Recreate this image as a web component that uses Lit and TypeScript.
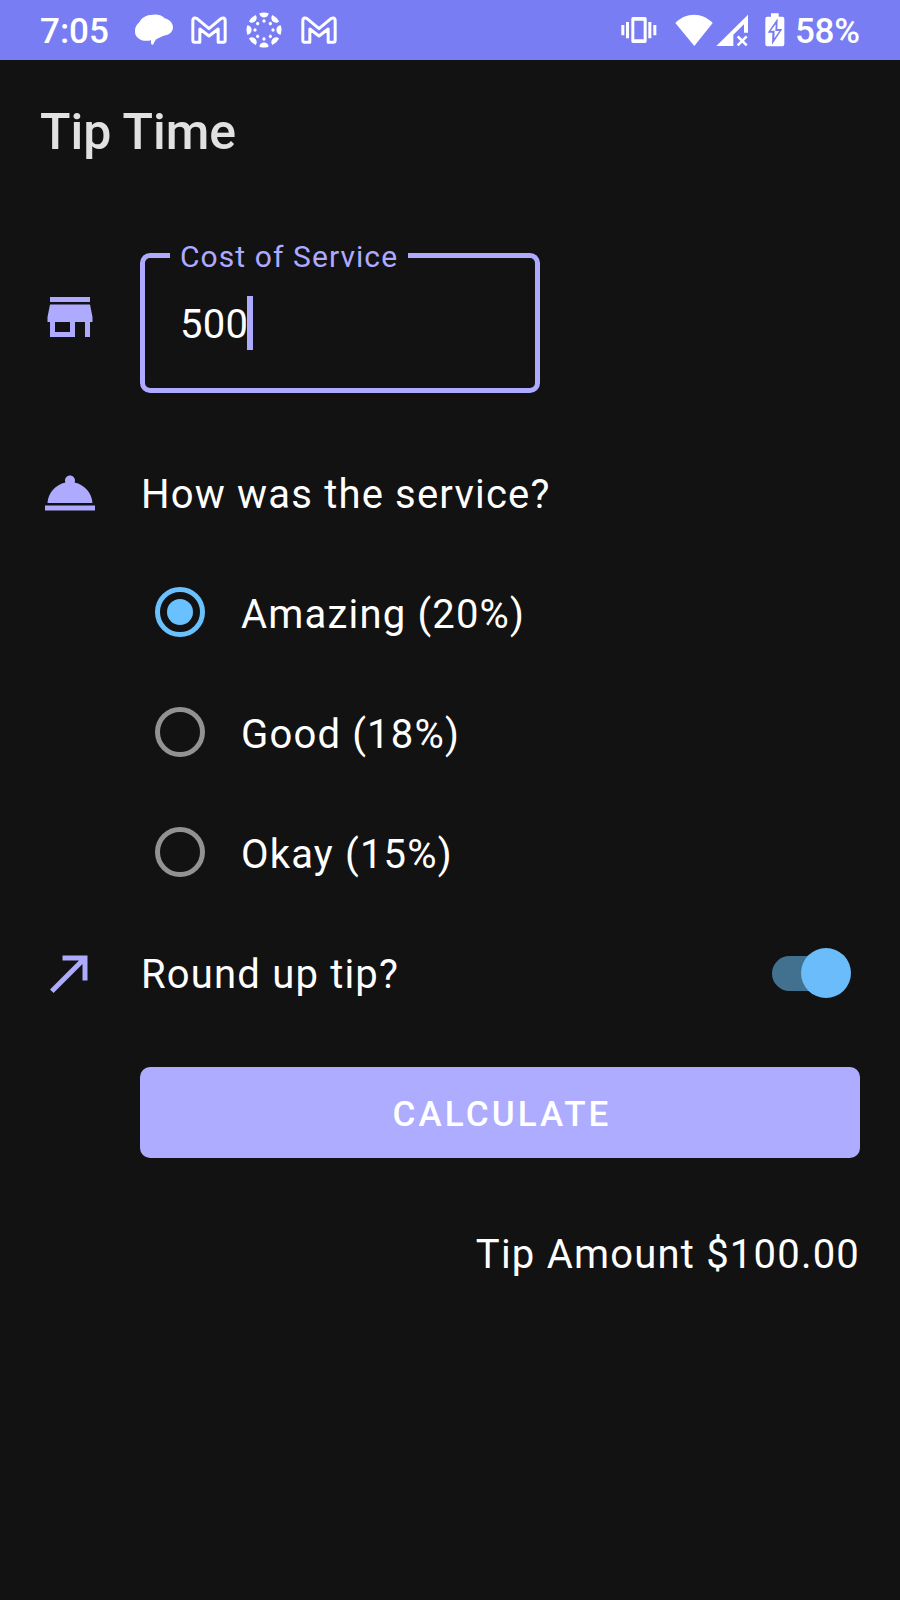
import { LitElement, html, css, svg } from "lit";
import { customElement, state } from "lit/decorators.js";

const PETALS = [0, 45, 90, 135, 180, 225, 270, 315];

const cloudIcon = html`<svg class="ico" width="40" height="32" viewBox="402 45 120 96">
  <path fill="#fff" d="M405 98C404 86 410 76 418 70C424 56 440 46 462 47C476 46 488 51 494 58C508 61 519 72 519 85C519 97 510 107 496 109C484 113 474 118 467 122L459 137C454 138 452 135 453 124C440 127 426 126 417 119C409 114 405 106 405 98Z"/>
</svg>`;

const mailIcon = html`<svg class="ico" width="36" height="28" viewBox="574 46 108 84">
  <path fill="none" stroke="#fff" stroke-width="9" stroke-linejoin="round" d="M579.500 60V119Q579.500 125 585 125H600.500V85L628 106L655.500 85V125H671Q676.500 125 676.500 119V60C676.500 51 668 49 661 56L628 84L595 56C588 49 579.500 51 579.500 60Z"/>
</svg>`;

const ringIcon = html`<svg class="ico" width="36" height="36" viewBox="-54 -54 108 108" fill="#fff">
  ${PETALS.map(
    (a) => svg`<g transform="rotate(${a})"><path d="M-14 -50Q0 -55 14 -50C13 -33 -13 -33 -14 -50Z"/><circle cy="-27" r="5"/></g>`
  )}
</svg>`;

const vibrateIcon = html`<svg class="ico" width="36" height="28" viewBox="62 48 108 84" fill="#fff">
  <path fill-rule="evenodd" d="M98 51H134Q139 51 139 56V124Q139 129 134 129H98Q93 129 93 124V56Q93 51 98 51ZM102 62V118H130V62Z"/>
  <path d="M77 66h9v49h-9zM63 75h9v31h-9zM144 66h9v49h-9zM159 75h9v31h-9z"/>
</svg>`;

const wifiIcon = html`<svg class="ico" width="38" height="32" viewBox="224 40 114 96">
  <path fill="#fff" d="M225 67C256 34 306 34 337 67L282 136Z"/>
</svg>`;

const signalIcon = html`<svg class="ico" width="33" height="33" viewBox="346 40 99 99">
  <path fill="#fff" fill-rule="evenodd" d="M347 136L442 42V96H430V71L398 102V136Z"/>
  <path stroke="#fff" stroke-width="8" d="M411 107L438 134M438 107L411 134"/>
</svg>`;

const batteryIcon = html`<svg class="ico" width="20" height="34" viewBox="494 38 60 102">
  <path fill="#fff" d="M512 39H535V49H546Q552 49 552 55V132Q552 138 546 138H501Q495 138 495 132V55Q495 49 501 49H512Z"/>
  <path fill="#787df4" d="M532 54L502 97H516L515 133L546 86H531Z"/>
  <path fill="#fff" d="M526 72L511 91H523L522 114L537 92H525Z"/>
</svg>`;

@customElement("app-root")
export class AppRoot extends LitElement {
  @state() private selected = 0;
  @state() private roundUp = true;

  private options = ["Amazing (20%)", "Good (18%)", "Okay (15%)"];

  static styles = css`
    :host {
      display: block;
      height: 1600px;
      background: #121212;
      color: #fff;
      font-family: Roboto, sans-serif;
      font-size: 40px;
      letter-spacing: 1.18px;
      line-height: 48px;
      overflow: hidden;
    }
    * { box-sizing: border-box; }
    svg { display: block; flex: none; }
    .status {
      display: flex;
      align-items: center;
      height: 60px;
      padding: 0 41px 0 40px;
      background: #787df4;
      font-size: 35px;
      font-weight: 500;
      letter-spacing: 0;
    }
    .clock { width: 94px; padding-top: 4px; }
    .notes { display: flex; align-items: center; gap: 19px; }
    .notes svg:first-child { margin-right: -2px; }
    .system { display: flex; align-items: center; margin-left: auto; }
    .wifi { margin-left: 18px; }
    .signal { margin-left: 3px; }
    .battery { margin-left: 16px; }
    .percent { margin-left: 10px; padding-top: 4px; width: 64px; white-space: nowrap; letter-spacing: -0.3px; }
    .title {
      display: flex;
      align-items: center;
      height: 140px;
      padding: 4px 40px 0;
      margin: 0;
      color: #e1e1e1;
      font-size: 50px;
      font-weight: 500;
      letter-spacing: 0;
    }
    main { padding: 40px 40px 0; }
    .row {
      display: grid;
      grid-template-columns: 60px 1fr auto;
      column-gap: 40px;
      align-items: center;
    }
    .glyph { width: 60px; height: 60px; fill: #aeaaff; }
    .text { padding: 4px 0 0 1px; }
    .cost { height: 153px; }
    fieldset {
      width: 400px;
      height: 153px;
      margin: 0;
      padding: 0 35px;
      border: 5px solid #aeaaff;
      border-radius: 10px;
      min-width: 0;
    }
    legend {
      margin-left: -10px;
      padding: 0 10px;
      height: 30px;
      line-height: 34px;
      font-size: 30px;
      letter-spacing: 1.08px;
      color: #aeaaff;
      white-space: nowrap;
    }
    .value { display: flex; align-items: center; height: 105px; letter-spacing: 0.3px; }
    .value span { padding-top: 5px; }
    .caret { width: 6px; height: 54px; margin-left: -1px; background: #aeaaff; }
    .question { height: 60px; margin-top: 70px; }
    .options { margin: 29px 0 0 115px; }
    .option { display: flex; align-items: center; gap: 36px; height: 120px; cursor: pointer; }
    .label { padding-top: 5px; }
    .radio {
      display: grid;
      place-items: center;
      width: 50px;
      height: 50px;
      border: 5px solid #929292;
      border-radius: 50%;
    }
    .radio.on { border-color: #6ac1ff; }
    .radio.on::before { content: ""; width: 26px; height: 26px; border-radius: 50%; background: #6ac1ff; }
    .round { height: 120px; margin-top: 1px; }
    .switch {
      display: flex;
      align-items: center;
      justify-content: flex-end;
      width: 79px;
      height: 35px;
      margin-right: 9px;
      border-radius: 18px;
      background: linear-gradient(90deg, #42708f 60px, transparent 60px);
    }
    .switch.off { justify-content: flex-start; }
    .thumb { width: 50px; height: 50px; flex: none; border-radius: 50%; background: #6abcfb; }
    .calc {
      display: block;
      width: 720px;
      height: 91px;
      margin: 34px 0 0 100px;
      padding: 4px 0 0 4px;
      border: 0;
      border-radius: 10px;
      background: #aeacff;
      color: #fff;
      font: 500 35px/42px Roboto, sans-serif;
      letter-spacing: 3.1px;
    }
    .result { margin-top: 73px; text-align: right; letter-spacing: 1.2px; }
  `;

  render() {
    return html`
      <header class="status">
        <span class="clock">7:05</span>
        <div class="notes">${cloudIcon}${mailIcon}${ringIcon}${mailIcon}</div>
        <div class="system">
          ${vibrateIcon}
          <span class="wifi">${wifiIcon}</span>
          <span class="signal">${signalIcon}</span>
          <span class="battery">${batteryIcon}</span>
          <span class="percent">58%</span>
        </div>
      </header>
      <h1 class="title">Tip Time</h1>
      <main>
        <div class="row cost">
          <svg class="glyph" viewBox="0 0 24 24"><path d="M20 4H4v2h16V4zm1 10v-2l-1-5H4l-1 5v2h1v6h10v-6h4v6h2v-6h1zm-9 4H6v-4h6v4z"/></svg>
          <fieldset>
            <legend>Cost of Service</legend>
            <div class="value"><span>500</span><i class="caret"></i></div>
          </fieldset>
        </div>
        <div class="row question">
          <svg class="glyph" viewBox="0 0 24 24"><path d="M2 17h20v2H2zm11.84-9.21c.1-.24.16-.51.16-.79 0-1.1-.9-2-2-2s-2 .9-2 2c0 .28.06.55.16.79C6.25 8.6 3.27 11.93 3 16h18c-.27-4.07-3.25-7.4-7.16-8.21z"/></svg>
          <span class="text">How was the service?</span>
        </div>
        <div class="options">
          ${this.options.map(
            (label, i) => html`<div class="option" @click=${() => (this.selected = i)}>
              <span class="radio ${i === this.selected ? "on" : ""}"></span><span class="label">${label}</span>
            </div>`
          )}
        </div>
        <div class="row round">
          <svg class="glyph" viewBox="0 0 24 24"><path d="M9 5v2h6.59L4 18.59 5.41 20 17 8.41V15h2V5z"/></svg>
          <span class="text">Round up tip?</span>
          <span class="switch ${this.roundUp ? "" : "off"}" @click=${() => (this.roundUp = !this.roundUp)}>
            <i class="thumb"></i>
          </span>
        </div>
        <button class="calc">CALCULATE</button>
        <div class="result">Tip Amount $100.00</div>
      </main>
    `;
  }
}
